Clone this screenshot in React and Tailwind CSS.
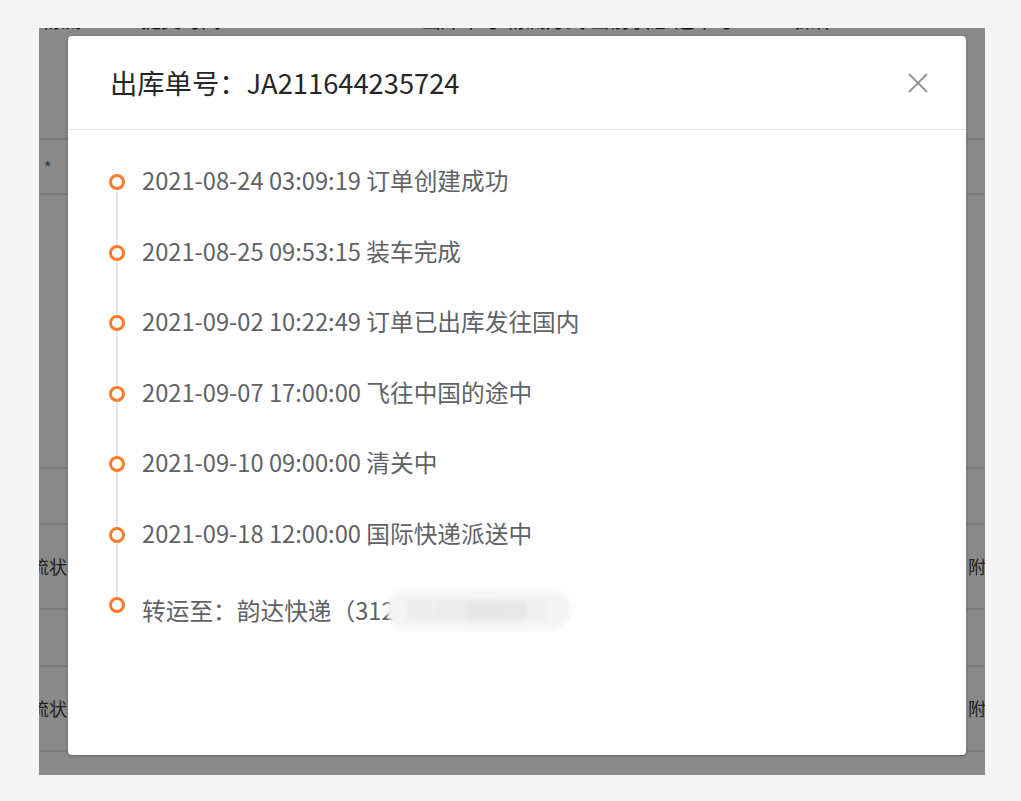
import React from 'react';

const events = [
    { time: '2021-08-24 03:09:19', text: '订单创建成功' },
    { time: '2021-08-25 09:53:15', text: '装车完成' },
    { time: '2021-09-02 10:22:49', text: '订单已出库发往国内' },
    { time: '2021-09-07 17:00:00', text: '飞往中国的途中' },
    { time: '2021-09-10 09:00:00', text: '清关中' },
    { time: '2021-09-18 12:00:00', text: '国际快递派送中' },
];

const font = { fontFamily: '"Noto Sans CJK SC", "Noto Sans", sans-serif' };

const TimelineRow = ({ first, last, children }) => (
    <div className="flex h-[70.5px]">
        <div className="w-[16px] flex flex-col items-center shrink-0">
            <div className={`w-[2px] h-[4px] ${first ? '' : 'bg-[#e4e7ed]'}`}></div>
            <div className="w-[16px] h-[16px] rounded-full border-[3px] border-[#fb7b2c] bg-white shrink-0"></div>
            <div className={`w-[2px] flex-1 ${last ? '' : 'bg-[#e4e7ed]'}`}></div>
        </div>
        <div className="ml-[17px] -mt-[3px] text-[23.7px] leading-[26px] text-[#606266] whitespace-nowrap">{children}</div>
    </div>
);

const App = () => {
    return (
        <div className="w-[1021px] h-[801px] bg-[#f4f4f4] pt-[28px] pl-[39px] overflow-hidden" style={font}>
            <div className="relative w-[946px] h-[747px] bg-[#898989] overflow-hidden">
                {/* table behind the mask */}
                <div className="h-[112px] border-b-2 border-[#7d7d7d] overflow-hidden">
                    <div className="-mt-[20px] flex gap-[60px] pl-[2px] text-[20px] leading-[24px] text-[#111] whitespace-nowrap">
                        <span>物流</span>
                        <span>提交时间</span>
                        <span className="ml-[140px]">出库单号 物流方式 当前状态 运单号</span>
                        <span>操作</span>
                    </div>
                </div>
                <div className="h-[55px] border-b-2 border-[#7d7d7d] flex items-center pl-[5px] text-[16px] text-[#333]">*</div>
                <div className="h-[274px] border-b-2 border-[#7d7d7d]"></div>
                <div className="h-[56px] border-b-2 border-[#7d7d7d]"></div>
                <div className="h-[85px] border-b-2 border-[#7d7d7d] flex items-center justify-between text-[18px] text-[#222]">
                    <span className="-ml-[8px]">流状</span>
                    <span className="w-[17px] overflow-hidden">附</span>
                </div>
                <div className="h-[57px] border-b-2 border-[#7d7d7d]"></div>
                <div className="h-[85px] border-b-2 border-[#7d7d7d] flex items-center justify-between text-[18px] text-[#222]">
                    <span className="-ml-[8px]">流状</span>
                    <span className="w-[17px] overflow-hidden">附</span>
                </div>

                {/* dialog */}
                <div className="absolute left-[29px] top-[8px] w-[898px] h-[719px] bg-white rounded-[4px] shadow-[0_1px_3px_rgba(0,0,0,0.3)]">
                    <div className="h-[94px] border-b border-[#e6e6e6] flex items-center justify-between pl-[42px] pr-[37px]">
                        <div className="text-[27.3px] font-normal text-[#262626] whitespace-nowrap">出库单号：JA211644235724</div>
                        <svg width="22" height="22" viewBox="0 0 22 22" className="text-[#8f9399]">
                            <path d="M2 2 L20 20 M20 2 L2 20" stroke="currentColor" strokeWidth="1.8" fill="none" />
                        </svg>
                    </div>
                    <div className="pt-[40px] pl-[41px]">
                        {events.map((e, i) => (
                            <TimelineRow key={i} first={i === 0}>
                                {e.time} {e.text}
                            </TimelineRow>
                        ))}
                        <TimelineRow last>
                            <span className="inline-flex items-center">
                                转运至：韵达快递（312
                                <span className="-ml-[8px] inline-flex w-[184px] h-[40px] rounded-full bg-[#f5f5f5] blur-[2px] items-center px-[20px]">
                                    <span className="w-[30px] h-[22px] bg-[#eeeeee]"></span>
                                    <span className="w-[30px] h-[22px] bg-[#ececec]"></span>
                                    <span className="w-[30px] h-[22px] bg-[#e6e6e6]"></span>
                                    <span className="w-[30px] h-[22px] bg-[#e8e8e8]"></span>
                                    <span className="w-[20px] h-[22px] bg-[#f0f0f0]"></span>
                                </span>
                            </span>
                        </TimelineRow>
                    </div>
                </div>
            </div>
        </div>
    );
};

export default App;
